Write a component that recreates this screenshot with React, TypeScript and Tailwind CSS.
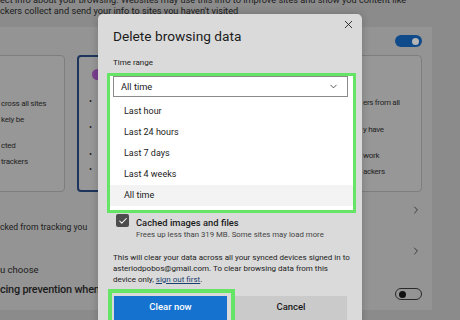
import { ChevronDown, ChevronRight, X, Check } from "lucide-react";

const font = { fontFamily: 'Roboto, "Liberation Sans", sans-serif' };

function BgCards() {
  return (
    <div className="flex h-[137px] mt-[8px] gap-[12px]">
      {/* left card, clipped by the page edge */}
      <div className="w-[85px] -ml-[20px] shrink-0 border border-[#7e7e7e] rounded-[4px] bg-[#979797] pl-[20px] pt-[40px] text-[8px] tracking-[-0.25px] leading-[16px] text-[#1f1f1f]">
        <p className="whitespace-nowrap">cross all sites</p>
        <p className="whitespace-nowrap">kely be</p>
        <p className="whitespace-nowrap mt-[10px]">cted</p>
        <p className="whitespace-nowrap">trackers</p>
      </div>
      {/* middle card, selected */}
      <div className="w-[150px] shrink-0 border-2 border-[#1d355c] rounded-[4px] bg-[#979797] pl-[10px] pt-[12px] text-[#1f1f1f]">
        <div className="w-[11px] h-[11px] rounded-full bg-[#7a3f8f] ml-[3px]" />
        <div className="flex flex-col mt-[15px] text-[9px] leading-[12px]">
          <span>•</span>
          <span className="mt-[14px]">•</span>
          <span className="mt-[15px]">•</span>
          <span className="mt-[3px]">•</span>
        </div>
      </div>
      <div className="flex-1" />
      {/* right card */}
      <div className="w-[70px] shrink-0 border border-[#7e7e7e] rounded-[4px] bg-[#979797] pl-[10px] pt-[39px] text-[8px] tracking-[-0.3px] leading-[16px] text-[#1f1f1f] overflow-hidden">
        <p className="whitespace-nowrap">ers from all</p>
        <p className="whitespace-nowrap mt-[11px]">y have</p>
        <p className="whitespace-nowrap mt-[10px]">work</p>
        <p className="whitespace-nowrap">ackers</p>
      </div>
    </div>
  );
}

function Background() {
  return (
    <div className="absolute inset-0 bg-[#8b8b8b] text-[#1c1c1c]">
      <div className="text-[9.2px] leading-[11px] -mt-[6.5px] whitespace-nowrap">
        <p>ect info about your browsing. Websites may use this info to improve sites and show you content like</p>
        <p>ckers collect and send your info to sites you haven't visited</p>
      </div>
      <div className="mt-[11.5px] w-[432px] h-[283px] bg-[#949494] pr-[10px] pt-[8px]">
        <div className="flex justify-end">
          <div className="w-[27px] h-[12px] rounded-full bg-[#0f4a8a] flex items-center justify-end pr-[3px]">
            <div className="w-[7px] h-[7px] rounded-full bg-[#b5b5b5]" />
          </div>
        </div>
        <BgCards />
        <div className="flex justify-end mt-[12px]">
          <ChevronRight className="w-[12px] h-[12px] text-[#1c1c1c]" strokeWidth={1.5} />
        </div>
        <p className="mt-[5px] text-[8.6px] leading-[12px] whitespace-nowrap">cked from tracking you</p>
        <div className="flex justify-end mt-[12px]">
          <ChevronRight className="w-[12px] h-[12px] text-[#1c1c1c]" strokeWidth={1.5} />
        </div>
        <p className="mt-[7px] text-[9.5px] leading-[12px] whitespace-nowrap">u choose</p>
        <div className="flex items-start justify-between mt-[6px]">
          <p className="text-[10.9px] tracking-[-0.2px] leading-[16px] font-medium whitespace-nowrap">cing prevention when b</p>
          <div className="mt-[6px] w-[27px] h-[12px] rounded-full border border-[#2a2a2a] flex items-center pl-[3px]">
            <div className="w-[7px] h-[7px] rounded-full bg-[#111]" />
          </div>
        </div>
      </div>
    </div>
  );
}

function Dialog() {
  const options = ["Last hour", "Last 24 hours", "Last 7 days", "Last 4 weeks", "All time"];
  return (
    <div className="absolute left-[98px] top-[14px] w-[264px] h-[320px] bg-[#dadada] rounded-t-[5px] shadow-[0_0_8px_rgba(0,0,0,0.2)] text-[#1b1b1b]">
      <div className="flex justify-between pl-[15px] pr-[7px]">
        <h1 className="mt-[12px] text-[13.7px] leading-[20px] font-normal">Delete browsing data</h1>
        <X className="mt-[4px] w-[13px] h-[13px]" strokeWidth={1.6} />
      </div>
      <p className="pl-[15px] mt-[11px] text-[8px] leading-[12px]">Time range</p>
      <div className="ml-[9px] mt-[4px] w-[249px] border-[3px] border-[#66e466] bg-white">
        <div className="ml-[3px] mr-[5px] h-[21px] border border-[#8a8a8a] flex items-center justify-between pl-[7px] pr-[8px]">
          <span className="text-[9.3px]">All time</span>
          <ChevronDown className="w-[11px] h-[11px]" strokeWidth={1.6} />
        </div>
        <div className="pt-[4px] pb-[4px]">
          {options.map((o, i) => (
            <div
              key={o}
              className={`h-[21px] flex items-center pl-[14px] text-[9px] ${i === options.length - 1 ? "bg-[#f3f3f3]" : ""}`}
            >
              {o}
            </div>
          ))}
        </div>
      </div>
      <div className="flex items-start gap-[7px] pl-[18px] mt-[1px]">
        <div className="w-[13px] h-[13px] rounded-[2px] bg-[#4d4d4d] flex items-center justify-center">
          <Check className="w-[10px] h-[10px] text-white" strokeWidth={2.5} />
        </div>
        <div className="mt-[2px]">
          <p className="text-[9.4px] leading-[13px] font-medium">Cached images and files</p>
          <p className="text-[7.8px] leading-[11px] text-[#444]">Frees up less than 319 MB. Some sites may load more</p>
        </div>
      </div>
      <p className="px-[15px] mt-[12px] text-[8px] leading-[11px] whitespace-nowrap">
        This will clear your data across all your synced devices signed in to
        <br />
        asteriodpobos@gmail.com. To clear browsing data from this
        <br />
        device only, <span className="underline text-[#1a3e6e]">sign out first</span>.
      </p>
      <div className="flex mt-[3.5px]">
        <div className="ml-[10px] border-[4px] border-[#66e466] pl-[2px] pt-[3px] pr-[4px]">
          <div className="w-[113px] h-[24px] bg-[#1672cf] text-white text-[9.5px] font-medium flex items-center justify-center">
            Clear now
          </div>
        </div>
        <div className="w-[112px] mt-[7px] h-[24px] bg-[#cacaca] text-[9.5px] font-medium flex items-center justify-center">
          Cancel
        </div>
      </div>
    </div>
  );
}

export default function App() {
  return (
    <div className="relative w-[460px] h-[320px] overflow-hidden" style={font}>
      <Background />
      <Dialog />
    </div>
  );
}
